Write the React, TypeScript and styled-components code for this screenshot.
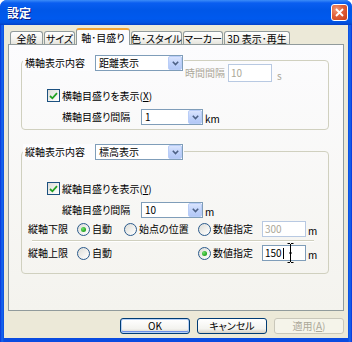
import React from "react";
import styled, { createGlobalStyle } from "styled-components";

const GlobalStyle = createGlobalStyle`
  html, body {
    margin: 0;
    padding: 0;
    background: #ffffff;
  }
  body {
    font-family: "Noto Sans CJK JP", "Noto Sans", sans-serif;
    font-feature-settings: "palt";
    font-size: 10px;
    line-height: 1;
    color: #000;
  }
  * {
    box-sizing: border-box;
  }
`;

const Window = styled.div`
  width: 352px;
  height: 342px;
  display: flex;
  flex-direction: column;
  background: linear-gradient(to right, #0831d9 0, #166aee 2px, #0a4be0 4px, #0a4be0 348px, #166aee 350px, #0831d9 352px);
  border-radius: 7px 7px 0 0;
  overflow: hidden;
`;

const TitleBar = styled.div`
  height: 25px;
  flex: none;
  display: flex;
  align-items: center;
  justify-content: space-between;
  padding: 0 4px 0 7px;
  background: linear-gradient(
    to bottom,
    #3c8cf8 0%,
    #0a5ef0 12%,
    #0057e8 40%,
    #0059ee 75%,
    #0252e0 90%,
    #0340c8 100%
  );
`;

const Title = styled.span`
  color: #fff;
  font-weight: bold;
  font-size: 12px;
  text-shadow: 1px 1px 0 #0a1883;
`;

const CloseButton = styled.div`
  width: 17px;
  height: 17px;
  border: 1px solid #fff;
  border-radius: 3px;
  background: radial-gradient(circle at 30% 30%, #f29a78 0%, #e0603a 45%, #c83e17 100%);
  display: flex;
  align-items: center;
  justify-content: center;
`;

const Client = styled.div`
  flex: 1;
  margin: 0 4px 4px;
  background: #ece9d8;
  padding: 3px 4px 4px 4px;
  display: flex;
  flex-direction: column;
`;

const TabStrip = styled.div`
  height: 16px;
  flex: none;
  display: flex;
  align-items: flex-end;
  padding-left: 2px;
`;

const Tab = styled.div<{ $width: number; $active?: boolean }>`
  width: ${(p) => p.$width}px;
  height: ${(p) => (p.$active ? 17 : 13)}px;
  margin-right: 1px;
  margin-bottom: ${(p) => (p.$active ? -1 : 0)}px;
  position: relative;
  z-index: ${(p) => (p.$active ? 1 : 0)};
  display: flex;
  align-items: center;
  justify-content: center;
  white-space: nowrap;
  border: 1px solid #919b9c;
  border-bottom: none;
  border-top: ${(p) => (p.$active ? "2px solid #f3a535" : "1px solid #919b9c")};
  border-radius: 3px 3px 0 0;
  padding-top: ${(p) => (p.$active ? 0 : 1)}px;
  background: ${(p) =>
    p.$active ? "#fcfcfe" : "linear-gradient(to bottom, #ffffff 0%, #f3f3ef 60%, #e5e4dc 100%)"};
`;

const Panel = styled.div`
  flex: 1;
  border: 1px solid #919b9c;
  background: linear-gradient(to bottom, #fcfcfe 0%, #f4f3ee 100%);
  padding: 15px 14px 0 12px;
  display: flex;
  flex-direction: column;
`;

const GroupBox = styled.div<{ $top?: number; $bottom: number }>`
  border: 1px solid #d0d0bf;
  border-radius: 4px;
  margin-top: ${(p) => p.$top ?? 0}px;
  padding-bottom: ${(p) => p.$bottom}px;
  display: flex;
  flex-direction: column;
`;

const GroupHeader = styled.div<{ $lift: number }>`
  display: flex;
  align-items: flex-start;
  margin-top: -${(p) => p.$lift}px;
`;

const Legend = styled.div`
  display: flex;
  align-items: center;
  margin-left: 1px;
  padding: 0 1px 0 2px;
  background: #fcfcfe;
  gap: 10px;
`;

const Label = styled.span<{ $disabled?: boolean; $width?: number }>`
  white-space: nowrap;
  color: ${(p) => (p.$disabled ? "#aca899" : "#000")};
  ${(p) => (p.$width ? `width: ${p.$width}px; flex: none;` : "")}
`;

const TimeGroup = styled.div`
  display: flex;
  align-items: center;
  margin-top: 9px;
  margin-left: 1px;
  gap: 3px;
`;

const ComboBox = styled.div<{ $width: number }>`
  width: ${(p) => p.$width}px;
  height: 16px;
  flex: none;
  border: 1px solid #7f9db9;
  background: #fff;
  display: flex;
  align-items: center;
  justify-content: space-between;
  padding-left: 3px;
`;

const DropButton = styled.div`
  width: 14px;
  height: 14px;
  border-radius: 2px;
  border: 1px solid #b9cdf7;
  background: linear-gradient(to bottom, #dae4fd 0%, #c1d3fb 50%, #b3c8f6 100%);
  display: flex;
  align-items: center;
  justify-content: center;
`;

const TextBox = styled.div<{ $width: number; $height: number; $disabled?: boolean }>`
  width: ${(p) => p.$width}px;
  height: ${(p) => p.$height}px;
  flex: none;
  position: relative;
  border: 1px solid ${(p) => (p.$disabled ? "#b8c9e2" : "#7f9db9")};
  background: #fff;
  color: ${(p) => (p.$disabled ? "#aca899" : "#000")};
  display: flex;
  align-items: center;
  padding-left: 2px;
`;

const Caret = styled.span`
  width: 1px;
  height: 11px;
  background: #000;
  margin-left: 1px;
`;

const IBeam = styled.svg`
  position: absolute;
  left: 24px;
  top: -3px;
`;

const Row = styled.div<{ $top: number; $left: number; $gap?: number }>`
  display: flex;
  align-items: center;
  margin-top: ${(p) => p.$top}px;
  padding-left: ${(p) => p.$left}px;
  gap: ${(p) => p.$gap ?? 0}px;
`;

const CheckBox = styled.span`
  width: 13px;
  height: 13px;
  flex: none;
  border: 1px solid #1c5180;
  background: linear-gradient(135deg, #dcdcd7 0%, #f6f6f4 70%, #ffffff 100%);
  display: flex;
  align-items: center;
  justify-content: center;
  margin-right: 2px;
`;

const Unit = styled.span<{ $disabled?: boolean }>`
  margin-left: 2px;
  color: ${(p) => (p.$disabled ? "#aca899" : "#000")};
  align-self: flex-end;
  padding-bottom: 1px;
`;

const LimitRow = styled.div<{ $top: number }>`
  display: grid;
  grid-template-columns: 49px 47px 74px 64px 44px auto;
  align-items: center;
  margin-top: ${(p) => p.$top}px;
  padding-left: 6px;
`;

const RadioOption = styled.label`
  display: flex;
  align-items: center;
  gap: 2px;
  white-space: nowrap;
`;

const RadioCircle = styled.span<{ $checked?: boolean }>`
  width: 13px;
  height: 13px;
  flex: none;
  border-radius: 50%;
  border: 1px solid #2a5a8c;
  background: linear-gradient(135deg, #dcdcd7 0%, #f6f6f4 70%, #ffffff 100%);
  display: flex;
  align-items: center;
  justify-content: center;
  &::after {
    content: "";
    display: ${(p) => (p.$checked ? "block" : "none")};
    width: 5px;
    height: 5px;
    border-radius: 50%;
    background: radial-gradient(circle at 35% 35%, #6fe06b 0%, #2cad29 60%, #1a8a17 100%);
  }
`;

const Separator = styled.div`
  height: 2px;
  margin: 3px 14px 0 10px;
  border-top: 1px solid #d0d0bf;
  border-bottom: 1px solid #ffffff;
`;

const ButtonRow = styled.div`
  flex: none;
  display: flex;
  justify-content: flex-end;
  gap: 7px;
  margin-top: 7px;
`;

const Button = styled.button<{ $default?: boolean }>`
  width: 70px;
  height: 16px;
  padding: 0;
  font: inherit;
  font-feature-settings: "palt";
  line-height: 1;
  border: 1px solid ${(p) => (p.disabled ? "#c9c7ba" : "#003c74")};
  border-radius: 3px;
  color: ${(p) => (p.disabled ? "#aca899" : "#000")};
  background: ${(p) =>
    p.disabled ? "#f5f4ea" : "linear-gradient(to bottom, #ffffff 0%, #f3f3ef 70%, #d6d0c5 100%)"};
  box-shadow: ${(p) => (p.$default ? "inset 0 0 0 1px #b5d0f7, inset 0 -1px 0 1px #6d8fe8" : "none")};
`;

const Chevron = () => (
  <svg width="7" height="5" viewBox="0 0 7 5">
    <path d="M0.8 0.8 L3.5 3.5 L6.2 0.8" fill="none" stroke="#4d6185" strokeWidth="1.6" />
  </svg>
);

const Combo = ({ value, width }: { value: string; width: number }) => (
  <ComboBox $width={width}>
    <span>{value}</span>
    <DropButton>
      <Chevron />
    </DropButton>
  </ComboBox>
);

const Check = () => (
  <CheckBox>
    <svg width="9" height="8" viewBox="0 0 9 8">
      <path d="M1 4 L3.4 6.3 L8 1.2" fill="none" stroke="#21a121" strokeWidth="1.8" />
    </svg>
  </CheckBox>
);

const Radio = ({ label, checked }: { label: string; checked?: boolean }) => (
  <RadioOption>
    <RadioCircle $checked={checked} />
    <span>{label}</span>
  </RadioOption>
);

const tabs = [
  { label: "全般", width: 33 },
  { label: "サイズ", width: 31 },
  { label: "軸･目盛り", width: 54, active: true },
  { label: "色･スタイル", width: 51 },
  { label: "マーカー", width: 40 },
  { label: "3D 表示･再生", width: 66 },
];

export default function App() {
  return (
    <>
      <GlobalStyle />
      <Window>
        <TitleBar>
          <Title>設定</Title>
          <CloseButton>
            <svg width="9" height="9" viewBox="0 0 9 9">
              <path d="M1 1 L8 8 M8 1 L1 8" stroke="#fff" strokeWidth="1.8" />
            </svg>
          </CloseButton>
        </TitleBar>
        <Client>
          <TabStrip>
            {tabs.map((t) => (
              <Tab key={t.label} $width={t.width} $active={t.active}>
                {t.label}
              </Tab>
            ))}
          </TabStrip>
          <Panel>
            <GroupBox $bottom={4}>
              <GroupHeader $lift={6}>
                <Legend>
                  <Label>横軸表示内容</Label>
                  <Combo value="距離表示" width={88} />
                </Legend>
                <TimeGroup>
                  <Label $disabled>時間間隔</Label>
                  <TextBox $width={44} $height={18} $disabled>
                    10
                  </TextBox>
                  <Unit $disabled>s</Unit>
                </TimeGroup>
              </GroupHeader>
              <Row $top={7} $left={25}>
                <Check />
                <Label>
                  横軸目盛りを表示(<u>X</u>)
                </Label>
              </Row>
              <Row $top={7} $left={40}>
                <Label $width={79}>横軸目盛り間隔</Label>
                <Combo value="1" width={62} />
                <Unit>km</Unit>
              </Row>
            </GroupBox>

            <GroupBox $top={21} $bottom={12}>
              <GroupHeader $lift={8}>
                <Legend>
                  <Label>縦軸表示内容</Label>
                  <Combo value="標高表示" width={88} />
                </Legend>
              </GroupHeader>
              <Row $top={22} $left={25}>
                <Check />
                <Label>
                  縦軸目盛りを表示(<u>Y</u>)
                </Label>
              </Row>
              <Row $top={7} $left={40}>
                <Label $width={79}>縦軸目盛り間隔</Label>
                <Combo value="10" width={62} />
                <Unit>m</Unit>
              </Row>
              <LimitRow $top={3}>
                <Label>縦軸下限</Label>
                <Radio label="自動" checked />
                <Radio label="始点の位置" />
                <Radio label="数値指定" />
                <TextBox $width={44} $height={16} $disabled>
                  300
                </TextBox>
                <Unit>m</Unit>
              </LimitRow>
              <Separator />
              <LimitRow $top={3}>
                <Label>縦軸上限</Label>
                <Radio label="自動" />
                <span />
                <Radio label="数値指定" checked />
                <TextBox $width={44} $height={16}>
                  150
                  <Caret />
                  <IBeam width="7" height="20" viewBox="0 0 7 20">
                    <path
                      d="M0.5 0.5 H3 M4 0.5 H6.5 M3.5 1 V19 M0.5 19.5 H3 M4 19.5 H6.5 M2 10 H5"
                      fill="none"
                      stroke="#000"
                      strokeWidth="1"
                    />
                  </IBeam>
                </TextBox>
                <Unit>m</Unit>
              </LimitRow>
            </GroupBox>
          </Panel>
          <ButtonRow>
            <Button $default>OK</Button>
            <Button>キャンセル</Button>
            <Button disabled>
              適用(<u>A</u>)
            </Button>
          </ButtonRow>
        </Client>
      </Window>
    </>
  );
}
